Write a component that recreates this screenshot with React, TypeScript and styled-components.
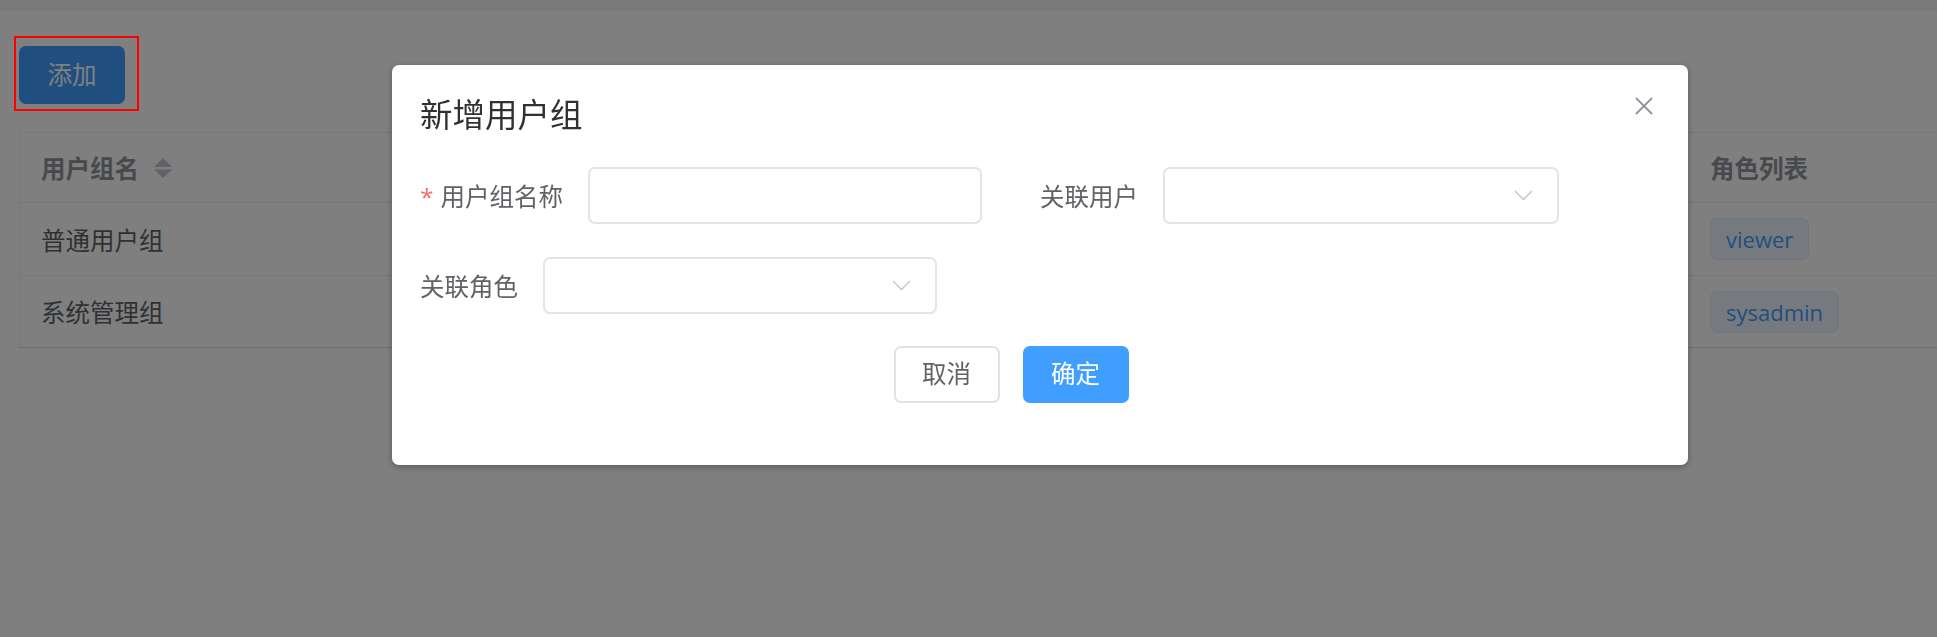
import React from "react";
import styled, { createGlobalStyle } from "styled-components";

const GlobalStyle = createGlobalStyle`
  html, body {
    margin: 0;
    padding: 0;
    background: #ffffff;
  }
  body {
    font-family: "Open Sans", "Noto Sans CJK SC", sans-serif;
    color: #606266;
  }
  * { box-sizing: border-box; }
`;

const Page = styled.div`
  width: 1937px;
  height: 637px;
  overflow: hidden;
  background: #ffffff;
`;

const TopStrip = styled.div`
  height: 10px;
  background: #f0f2f5;
`;

const Content = styled.div`
  padding: 36px 0 0 19px;
`;

const Toolbar = styled.div`
  display: flex;
  height: 58px;
  margin-bottom: 28px;
`;

const Button = styled.button<{ $primary?: boolean; $h?: number }>`
  display: inline-flex;
  align-items: center;
  justify-content: center;
  height: ${(p) => p.$h ?? 57}px;
  padding: 0 26.5px;
  font-family: "Open Sans", "Noto Sans CJK SC", sans-serif;
  font-size: 24.5px;
  line-height: 1;
  border-radius: 7px;
  border: 2px solid ${(p) => (p.$primary ? "#409eff" : "#dfe2e8")};
  background: ${(p) => (p.$primary ? "#409eff" : "#ffffff")};
  color: ${(p) => (p.$primary ? "#ffffff" : "#606266")};
  cursor: pointer;
`;

const Table = styled.div`
  border-left: 1px solid #ebeef5;
  border-top: 1px solid #ebeef5;
`;

const Row = styled.div<{ $h: number; $last?: boolean }>`
  display: grid;
  grid-template-columns: 1669px 1fr;
  height: ${(p) => p.$h + 1}px;
  border-bottom: 1px solid ${(p) => (p.$last ? "#dcdfe6" : "#ebeef5")};
`;

const Cell = styled.div<{ $head?: boolean }>`
  display: flex;
  align-items: center;
  padding-left: 21px;
  font-size: 24.5px;
  font-weight: ${(p) => (p.$head ? 700 : 400)};
  color: ${(p) => (p.$head ? "#909399" : "#606266")};
  white-space: nowrap;
`;

const Caret = styled.svg`
  margin-left: 15px;
  flex: none;
`;

const Tag = styled.span`
  display: inline-flex;
  align-items: center;
  height: 42px;
  padding: 0 15px;
  border: 1px solid #d9ecff;
  border-radius: 7px;
  background: #ecf5ff;
  color: #409eff;
  font-size: 22px;
  font-weight: 400;
`;

const Mask = styled.div`
  position: fixed;
  inset: 0;
  background: rgba(0, 0, 0, 0.5);
  z-index: 10;
`;

const Annotation = styled.div`
  position: fixed;
  left: 14px;
  top: 36px;
  width: 125px;
  height: 75px;
  border: 2px solid #ff0000;
  z-index: 30;
`;

const DialogWrapper = styled.div`
  position: fixed;
  inset: 0;
  z-index: 20;
`;

const Dialog = styled.div`
  margin: 65px 0 0 392px;
  width: 1296px;
  background: #ffffff;
  border-radius: 7px;
  box-shadow: 0 2px 6px rgba(0, 0, 0, 0.3);
`;

const DialogHeader = styled.div`
  display: flex;
  justify-content: space-between;
  align-items: flex-start;
  padding: 29px 35px 0 28px;
`;

const Title = styled.span`
  font-size: 32.5px;
  line-height: 42px;
  color: #303133;
`;

const CloseButton = styled.button`
  display: flex;
  padding: 0;
  margin-top: 3px;
  border: none;
  background: none;
  cursor: pointer;
`;

const DialogBody = styled.div`
  display: flex;
  flex-direction: column;
  gap: 33px;
  padding: 31px 28px 0 28px;
`;

const FormRow = styled.div`
  display: flex;
  align-items: center;
`;

const FormItem = styled.div<{ $offset?: number }>`
  display: flex;
  align-items: center;
  margin-left: ${(p) => p.$offset ?? 0}px;
`;

const Label = styled.label`
  padding-right: 25px;
  font-size: 24.5px;
  color: #606266;
  white-space: nowrap;
`;

const Required = styled.span`
  color: #f56c6c;
  margin-right: 7px;
`;

const Input = styled.div<{ $w: number }>`
  display: flex;
  align-items: center;
  justify-content: flex-end;
  width: ${(p) => p.$w}px;
  height: 57px;
  padding-right: 24px;
  border: 2px solid #e1e4eb;
  border-radius: 7px;
  background: #ffffff;
`;

const DialogFooter = styled.div`
  display: flex;
  justify-content: center;
  gap: 23px;
  padding: 32px 58px 62px 0;
`;

const Chevron = () => (
  <svg width="19" height="11" viewBox="0 0 19 11">
    <polyline points="1,1 9.5,9.5 18,1" fill="none" stroke="#c0c4cc" strokeWidth="1.4" />
  </svg>
);

export default function App() {
  return (
    <>
      <GlobalStyle />
      <Page>
        <TopStrip />
        <Content>
          <Toolbar>
            <Button $primary $h={58}>添加</Button>
          </Toolbar>
          <Table>
            <Row $h={69}>
              <Cell $head>
                用户组名
                <Caret width="18" height="20" viewBox="0 0 18 20">
                  <polygon points="0,9 9,0 18,9" fill="#c0c4cc" />
                  <polygon points="0,11.5 18,11.5 9,20" fill="#c0c4cc" />
                </Caret>
              </Cell>
              <Cell $head>角色列表</Cell>
            </Row>
            <Row $h={72}>
              <Cell>普通用户组</Cell>
              <Cell>
                <Tag>viewer</Tag>
              </Cell>
            </Row>
            <Row $h={71} $last>
              <Cell>系统管理组</Cell>
              <Cell>
                <Tag>sysadmin</Tag>
              </Cell>
            </Row>
          </Table>
        </Content>
      </Page>
      <Mask />
      <DialogWrapper>
        <Dialog>
          <DialogHeader>
            <Title>新增用户组</Title>
            <CloseButton aria-label="close">
              <svg width="18" height="18" viewBox="0 0 18 18">
                <line x1="1" y1="1" x2="17" y2="17" stroke="#909399" strokeWidth="1.8" />
                <line x1="17" y1="1" x2="1" y2="17" stroke="#909399" strokeWidth="1.8" />
              </svg>
            </CloseButton>
          </DialogHeader>
          <DialogBody>
            <FormRow>
              <FormItem>
                <Label>
                  <Required>*</Required>用户组名称
                </Label>
                <Input $w={394} />
              </FormItem>
              <FormItem $offset={58}>
                <Label>关联用户</Label>
                <Input $w={396}>
                  <Chevron />
                </Input>
              </FormItem>
            </FormRow>
            <FormRow>
              <FormItem>
                <Label>关联角色</Label>
                <Input $w={394}>
                  <Chevron />
                </Input>
              </FormItem>
            </FormRow>
          </DialogBody>
          <DialogFooter>
            <Button>取消</Button>
            <Button $primary>确定</Button>
          </DialogFooter>
        </Dialog>
      </DialogWrapper>
      <Annotation />
    </>
  );
}
